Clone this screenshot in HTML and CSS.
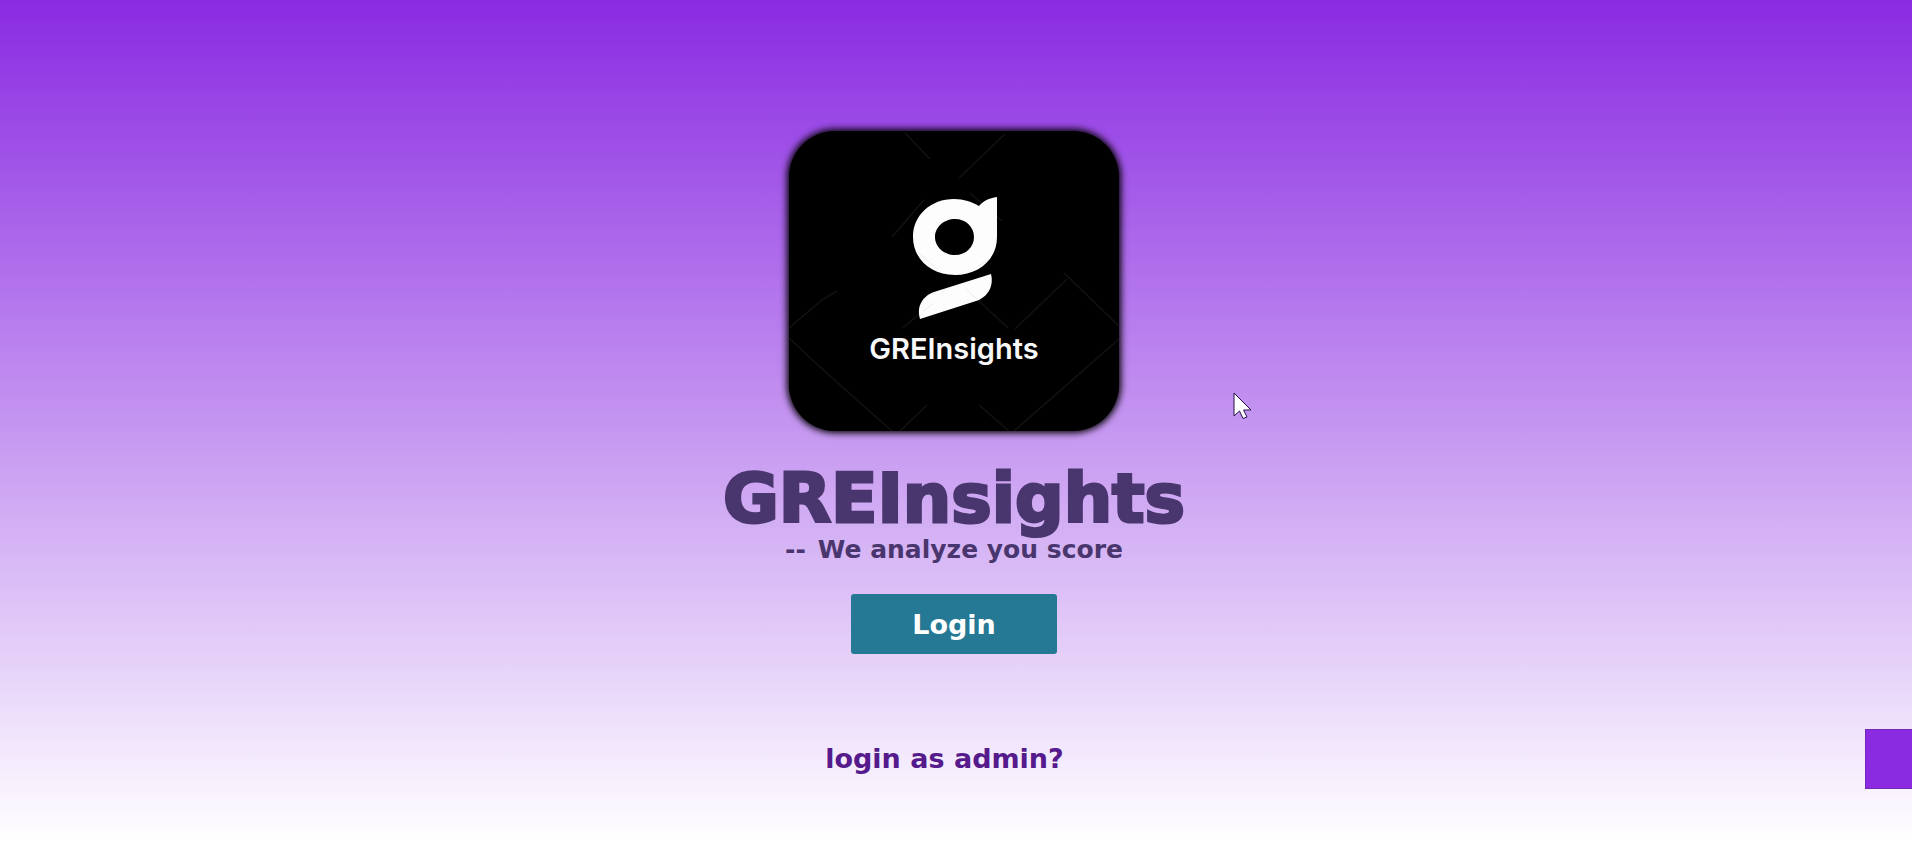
FILE: index.html
```
<!DOCTYPE html>
<html lang="en">
<head>
<meta charset="utf-8">
<title>GREInsights</title>
<link rel="stylesheet" href="styles.css">
</head>
<body>
<main class="hero">
  <div class="logo">
    <svg class="logo-art" viewBox="0 0 330 300" role="img" aria-label="GREInsights logo">
      <g class="logo-lines">
        <path d="M116 2L141 28M216 3L170 47M135 69L103 106M0 197L34 168L48 160M0 207L31 236L60 262L103 300M111 300L138 274M190 274L220 300M225 300L330 208M330 195L275 142M278 148L226 198M177 158L219 197M114 197L130 183M181 62L213 90"/>
      </g>
      <path class="logo-mark" fill-rule="evenodd" d="M165 68C175 68 183 71 190 75C194 70 200 67 208 66V106C208 129 189 144 166 144C142 144 124 128 124 106C124 84 142 68 165 68ZM166 88C155 88 146 96 146 106C146 116 155 124 166 124C177 124 185 116 185 106C185 96 177 88 166 88Z"/>
      <path class="logo-mark" d="M202 143C205 155 199 166 187 170L131 188C127 175 134 165 145 161Z"/>
      <path class="logo-grain" d="M129 121L149 139M152 162L157 158M189 136L200 128M177 158L188 168M134 180L145 172"/>
    </svg>
    <span class="logo-name">GREInsights</span>
  </div>
  <h1 class="title">GREInsights</h1>
  <p class="tagline"><span class="dashes">--</span>We analyze you score</p>
  <button class="login" type="button">Login</button>
  <svg class="cursor" viewBox="0 0 20 28" aria-hidden="true">
    <path d="M1 1V24L6.500 19L10 26.500L14 25L10.500 18H18Z"/>
  </svg>
</main>
<div class="admin-row">
  <a class="admin-link" href="#admin">login as admin?</a>
  <div class="slide-panel"></div>
</div>
</body>
</html>
```
FILE: styles.css
```
* {
  box-sizing: border-box;
}

body {
  margin: 0;
  min-height: 100vh;
  background: linear-gradient(#8a2be2, #ffffff);
  font-family: "DejaVu Sans", sans-serif;
  font-weight: 700;
  color: #4a366e;
}

.hero {
  position: relative;
  display: flex;
  flex-direction: column;
  align-items: center;
  padding: 131px 4px 0 0;
}

.logo {
  display: grid;
  width: 330px;
  height: 300px;
  border-radius: 46px;
  background: #000000;
  box-shadow: 0 0 7px 2px #000000;
  overflow: hidden;
}

.logo-art,
.logo-name {
  grid-area: 1 / 1;
}

.logo-lines {
  fill: none;
  stroke: #121212;
  stroke-width: 1.5;
}

.logo-mark {
  fill: #fdfdfd;
}

.logo-grain {
  fill: none;
  stroke: #ececec;
}

.logo-name {
  padding-top: 202px;
  text-align: center;
  font-family: Inter, sans-serif;
  font-size: 29px;
  line-height: 32px;
  font-weight: 600;
  color: #f8f8f8;
}

.title {
  margin: 32px 0 0;
  font-size: 68px;
  line-height: 72px;
  font-weight: 700;
  -webkit-text-stroke: 3px #4a366e;
}

.tagline {
  margin: 0;
  font-size: 25px;
  line-height: 30px;
}

.dashes {
  margin-right: 12px;
}

.login {
  width: 206px;
  height: 60px;
  margin-top: 29px;
  padding: 0;
  border: 0;
  border-radius: 3px;
  background: #267994;
  color: #ffffff;
  font: inherit;
  font-size: 27px;
}

.cursor {
  position: absolute;
  top: 392px;
  left: calc(50% + 277px);
  width: 20px;
  height: 28px;
  fill: #ffffff;
  stroke: #26104a;
}

.admin-row {
  display: grid;
  grid-template-columns: 1fr 47px;
  align-items: center;
  margin-top: 75px;
}

.admin-link {
  justify-self: center;
  margin-left: 24px;
  font-size: 27px;
  line-height: 32px;
  color: #551a8b;
  text-decoration: none;
}

.slide-panel {
  height: 60px;
  border: 1px solid #7628b8;
  border-right: 0;
  background: #8a2be2;
}
```
